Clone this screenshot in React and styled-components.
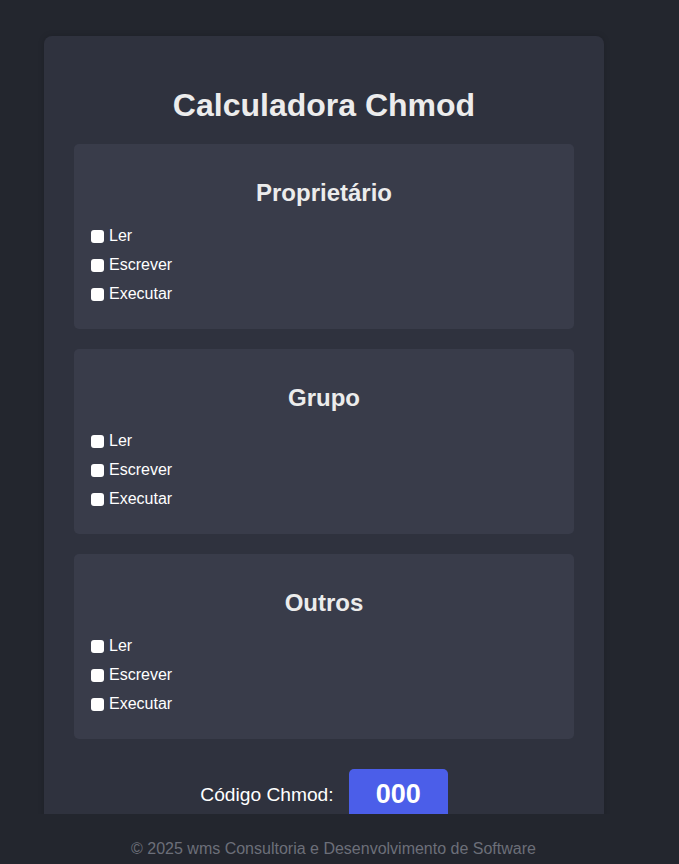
import React, { useState } from "react";
import styled, { createGlobalStyle } from "styled-components";

const GlobalStyle = createGlobalStyle`
  html, body {
    margin: 0;
    padding: 0;
    background: #23262e;
    font-family: "Liberation Sans", Arial, Helvetica, sans-serif;
    color: #ececec;
  }
  * { box-sizing: border-box; }
`;

const Page = styled.div`
  padding: 36px 0 60px 44px;
`;

const Container = styled.main`
  width: 560px;
  background: #2f323e;
  border-radius: 8px;
  padding: 0 30px 30px;
  display: flex;
  flex-direction: column;
  box-shadow: 0 0 6px rgba(0, 0, 0, 0.15);
`;

const Title = styled.h1`
  margin: 51px 0 20px;
  text-align: center;
  font-size: 32px;
  line-height: 37px;
  font-weight: 700;
  color: #ececec;
`;

const Sections = styled.div`
  display: flex;
  flex-direction: column;
  gap: 20px;
`;

const Section = styled.section`
  background: #393c4a;
  border-radius: 5px;
  padding: 15px 15px 26px;
`;

const SectionTitle = styled.h2`
  margin: 20px 0 19px;
  text-align: center;
  font-size: 24px;
  line-height: 28px;
  font-weight: 700;
  color: #ececec;
`;

const Options = styled.div`
  display: flex;
  flex-direction: column;
  gap: 10px;
`;

const Option = styled.label`
  display: flex;
  align-items: center;
  gap: 5px;
  height: 19px;
  font-size: 16px;
  color: #ffffff;
  cursor: pointer;
`;

const Check = styled.input.attrs({ type: "checkbox" })`
  appearance: none;
  -webkit-appearance: none;
  width: 13px;
  height: 13px;
  margin: 1px 0 0 2px;
  border-radius: 3px;
  background: #ffffff;
  border: none;
  position: relative;
  cursor: pointer;
  &:checked {
    background: #4b5ee9;
  }
  &:checked::after {
    content: "";
    position: absolute;
    left: 4px;
    top: 1px;
    width: 3px;
    height: 7px;
    border: solid #fff;
    border-width: 0 2px 2px 0;
    transform: rotate(45deg);
  }
`;

const Result = styled.div`
  margin-top: 30px;
  display: flex;
  align-items: center;
  justify-content: center;
  gap: 15px;
`;

const ResultLabel = styled.span`
  font-size: 19.2px;
  color: #ffffff;
`;

const Code = styled.div`
  background: #4b5ee9;
  border-radius: 5px;
  padding: 10px 27px;
  font-size: 27px;
  line-height: 31px;
  font-weight: 700;
  color: #ffffff;
`;

const Footer = styled.footer`
  position: fixed;
  left: 0;
  right: 0;
  bottom: 0;
  height: 50px;
  padding: 26px 12px 6px 0;
  background: #23262e;
  text-align: center;
  font-size: 16px;
  line-height: 18px;
  color: #6c6f79;
`;

const groups = [
  { key: "owner", title: "Proprietário" },
  { key: "group", title: "Grupo" },
  { key: "others", title: "Outros" },
];

const perms = [
  { key: "r", label: "Ler", value: 4 },
  { key: "w", label: "Escrever", value: 2 },
  { key: "x", label: "Executar", value: 1 },
];

export default function App() {
  const [state, setState] = useState({
    owner: { r: false, w: false, x: false },
    group: { r: false, w: false, x: false },
    others: { r: false, w: false, x: false },
  });

  const toggle = (g, p) =>
    setState((s) => ({ ...s, [g]: { ...s[g], [p]: !s[g][p] } }));

  const code = groups
    .map((g) =>
      perms.reduce((acc, p) => acc + (state[g.key][p.key] ? p.value : 0), 0)
    )
    .join("");

  return (
    <>
      <GlobalStyle />
      <Page>
        <Container>
          <Title>Calculadora Chmod</Title>
          <Sections>
            {groups.map((g) => (
              <Section key={g.key}>
                <SectionTitle>{g.title}</SectionTitle>
                <Options>
                  {perms.map((p) => (
                    <Option key={p.key}>
                      <Check
                        checked={state[g.key][p.key]}
                        onChange={() => toggle(g.key, p.key)}
                      />
                      {p.label}
                    </Option>
                  ))}
                </Options>
              </Section>
            ))}
          </Sections>
          <Result>
            <ResultLabel>Código Chmod:</ResultLabel>
            <Code>{code}</Code>
          </Result>
        </Container>
      </Page>
      <Footer>© 2025 wms Consultoria e Desenvolvimento de Software</Footer>
    </>
  );
}
